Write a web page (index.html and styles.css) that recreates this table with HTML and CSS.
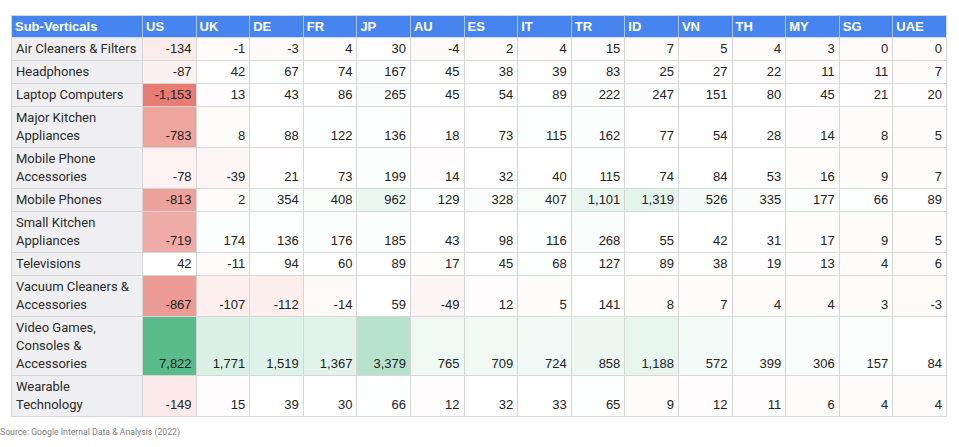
FILE: index.html
```html
<!DOCTYPE html>
<html>
<head>
<meta charset="utf-8">
<link rel="stylesheet" href="styles.css">
</head>
<body>
<div class="page">
<table class="heat">
<colgroup><col class="c-label"><col span="15"></colgroup>
<thead>
<tr><th>Sub-Verticals</th><th>US</th><th>UK</th><th>DE</th><th>FR</th><th>JP</th><th>AU</th><th>ES</th><th>IT</th><th>TR</th><th>ID</th><th>VN</th><th>TH</th><th>MY</th><th>SG</th><th>UAE</th></tr>
</thead>
<tbody>
<tr><td class="lbl">Air Cleaners &amp; Filters</td><td>-134</td><td>-1</td><td>-3</td><td>4</td><td>30</td><td>-4</td><td>2</td><td>4</td><td>15</td><td>7</td><td>5</td><td>4</td><td>3</td><td>0</td><td>0</td></tr>
<tr><td class="lbl">Headphones</td><td>-87</td><td>42</td><td>67</td><td>74</td><td>167</td><td>45</td><td>38</td><td>39</td><td>83</td><td>25</td><td>27</td><td>22</td><td>11</td><td>11</td><td>7</td></tr>
<tr><td class="lbl">Laptop Computers</td><td>-1,153</td><td>13</td><td>43</td><td>86</td><td>265</td><td>45</td><td>54</td><td>89</td><td>222</td><td>247</td><td>151</td><td>80</td><td>45</td><td>21</td><td>20</td></tr>
<tr><td class="lbl">Major Kitchen<br>Appliances</td><td>-783</td><td>8</td><td>88</td><td>122</td><td>136</td><td>18</td><td>73</td><td>115</td><td>162</td><td>77</td><td>54</td><td>28</td><td>14</td><td>8</td><td>5</td></tr>
<tr><td class="lbl">Mobile Phone<br>Accessories</td><td>-78</td><td>-39</td><td>21</td><td>73</td><td>199</td><td>14</td><td>32</td><td>40</td><td>115</td><td>74</td><td>84</td><td>53</td><td>16</td><td>9</td><td>7</td></tr>
<tr><td class="lbl">Mobile Phones</td><td>-813</td><td>2</td><td>354</td><td>408</td><td>962</td><td>129</td><td>328</td><td>407</td><td>1,101</td><td>1,319</td><td>526</td><td>335</td><td>177</td><td>66</td><td>89</td></tr>
<tr><td class="lbl">Small Kitchen<br>Appliances</td><td>-719</td><td>174</td><td>136</td><td>176</td><td>185</td><td>43</td><td>98</td><td>116</td><td>268</td><td>55</td><td>42</td><td>31</td><td>17</td><td>9</td><td>5</td></tr>
<tr><td class="lbl">Televisions</td><td>42</td><td>-11</td><td>94</td><td>60</td><td>89</td><td>17</td><td>45</td><td>68</td><td>127</td><td>89</td><td>38</td><td>19</td><td>13</td><td>4</td><td>6</td></tr>
<tr><td class="lbl">Vacuum Cleaners &amp;<br>Accessories</td><td>-867</td><td>-107</td><td>-112</td><td>-14</td><td>59</td><td>-49</td><td>12</td><td>5</td><td>141</td><td>8</td><td>7</td><td>4</td><td>4</td><td>3</td><td>-3</td></tr>
<tr><td class="lbl">Video Games,<br>Consoles &amp;<br>Accessories</td><td>7,822</td><td>1,771</td><td>1,519</td><td>1,367</td><td>3,379</td><td>765</td><td>709</td><td>724</td><td>858</td><td>1,188</td><td>572</td><td>399</td><td>306</td><td>157</td><td>84</td></tr>
<tr><td class="lbl">Wearable<br>Technology</td><td>-149</td><td>15</td><td>39</td><td>30</td><td>66</td><td>12</td><td>32</td><td>33</td><td>65</td><td>9</td><td>12</td><td>11</td><td>6</td><td>4</td><td>4</td></tr>
</tbody>
</table>
<p class="source">Source: Google Internal Data &amp; Analysis (2022)</p>
</div>
<script src="script.js"></script>
</body>
</html>
```

FILE: styles.css
```css
html, body {
  margin: 0;
  padding: 0;
  background: #ffffff;
}
.page {
  padding: 15px 0 0 0;
  width: 959px;
}
.heat {
  margin-left: 11px;
  width: 936px;
  table-layout: fixed;
  border-collapse: collapse;
  font-family: "Liberation Sans", Arial, sans-serif;
  font-size: 13px;
  color: #222222;
}
.c-label {
  width: 131px;
}
.heat th {
  background: #4685f0;
  color: #ffffff;
  font-weight: bold;
  text-align: left;
  line-height: 18px;
  padding: 2px 4px 1px 3px;
  border: 1px solid #a9c4f5;
  border-top-color: #d6d6d6;
  border-bottom-color: #d6d6d6;
}
.heat th:first-child {
  border-left-color: #d6d6d6;
}
.heat th:last-child {
  border-right-color: #d6d6d6;
}
.heat td {
  border: 1px solid #d6d6d6;
  text-align: right;
  vertical-align: bottom;
  line-height: 18px;
  padding: 2px 4px 2px 4px;
  background: #ffffff;
}
.heat td.lbl {
  text-align: left;
  background: #efeff1;
  font-family: Roboto, "Liberation Sans", sans-serif;
  color: #2a2a2a;
}
.source {
  margin: 10px 0 0 0;
  font-family: Roboto, "Liberation Sans", sans-serif;
  font-size: 8.7px;
  color: #808080;
}
```

FILE: script.js
```js
(function () {
  var cells = document.querySelectorAll('.heat tbody td:not(.lbl)');
  var vals = [];
  cells.forEach(function (c) { vals.push(parseFloat(c.textContent.replace(/,/g, ''))); });
  var min = Math.min.apply(null, vals), max = Math.max.apply(null, vals);
  var sorted = vals.slice().sort(function (a, b) { return a - b; });
  var mid = sorted[Math.floor(sorted.length / 2)];
  var red = [230, 124, 115], green = [87, 187, 138], white = [255, 255, 255];
  function mix(a, b, t) {
    return 'rgb(' + a.map(function (x, i) { return Math.round(x + (b[i] - x) * t); }).join(',') + ')';
  }
  cells.forEach(function (c, i) {
    var v = vals[i], col;
    if (v < mid) col = mix(white, red, (mid - v) / (mid - min));
    else col = mix(white, green, (v - mid) / (max - mid));
    c.style.background = col;
  });
})();
```
